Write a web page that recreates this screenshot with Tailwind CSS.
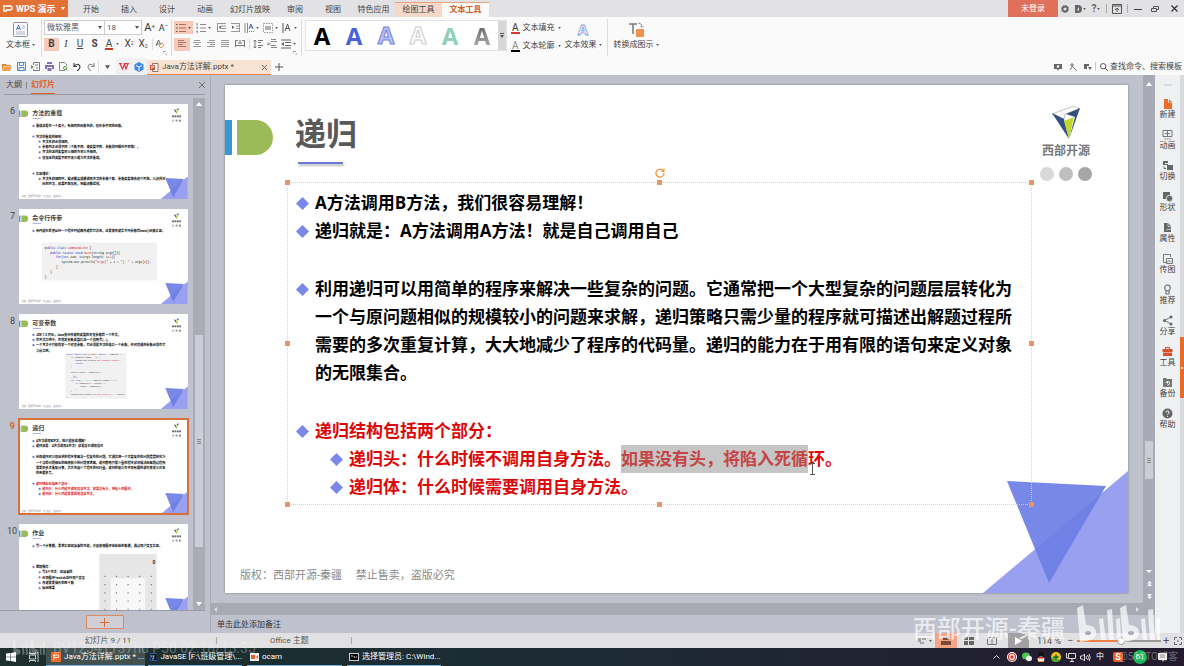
<!DOCTYPE html>
<html lang="zh-CN">
<head>
<meta charset="utf-8">
<meta name="viewport" content="width=device-width, initial-scale=1">
<title>Java方法详解.pptx - WPS 演示</title>
<script src="https://cdn.jsdelivr.net/npm/@tailwindcss/browser@4"></script>
</head>
<body class="h-screen overflow-hidden flex flex-col bg-[#bfc2cd] text-[8px] leading-[12px] text-[#444] font-['Roboto','Noto_Sans_CJK_SC',sans-serif]">

<svg class="hidden" aria-hidden="true">
  <symbol id="caret" viewBox="0 0 4 3"><path d="M0 0h4L2 3z" fill="#555"/></symbol>
  <symbol id="logo" viewBox="0 0 28 33">
    <path d="M0 8 22 0 28 3 13 8 12 13 3 9z" fill="#fff" stroke="#999" stroke-width=".6"/>
    <path d="M0 7 12 13 17 33z" fill="#34507f"/>
    <path d="M14 8 28 2 17 33 23 11z" fill="#34507f"/>
    <path d="M12 15 22 11 17 33z" fill="#bfd730"/>
  </symbol>
  <symbol id="corner" viewBox="0 0 145 122">
    <path d="M0 122 145 0V122z" fill="#99a0f0"/>
    <path d="M24 10 123 15 66 112z" fill="#6c7ee4" fill-opacity=".92"/>
  </symbol>
  <symbol id="deco" viewBox="0 0 903 508">
    <rect width="903" height="508" fill="#fff"/>
    <rect y="35" width="7" height="35" fill="#3498d6"/>
    <path d="M12 35h19a17.500 17.500 0 0 1 0 35H12z" fill="#9bbb59"/>
    <rect x="73" y="77" width="45" height="3" fill="#6b79d8"/>
    <use href="#logo" x="827" y="21" width="28" height="33"/>
    <g fill="#666"><rect x="818" y="61" width="10" height="10"/><rect x="831" y="61" width="10" height="10"/><rect x="844" y="61" width="10" height="10"/><rect x="857" y="61" width="9" height="10"/></g>
    <circle cx="823" cy="89" r="6" fill="#bbb"/><circle cx="842" cy="89" r="6" fill="#999"/><circle cx="860" cy="89" r="6" fill="#888"/>
    <use href="#corner" x="758" y="386" width="145" height="122"/>
    <text x="15" y="496" font-size="11" font-weight="400" fill="#888">版权：西部开源-秦疆　禁止售卖，盗版必究</text>
  </symbol>
  <symbol id="bili" viewBox="0 0 85 38">
    <g fill="currentColor">
      <path d="M2 3 8 0 11 20Q22 20 21 30 18 36 5 37z"/><path d="M24 14 28 13 31 35H26z"/><path d="M32 5 37 4 39 35H34z"/><path d="M41 14 45 13 46 35H42z"/>
      <path d="M45 3 51 0 54 20Q65 20 64 30 61 36 48 37z"/><path d="M66 14 70 13 72 35H68z"/><path d="M73 5 78 4 80 35H75z"/><path d="M81 14 85 13V35H82z"/>
    </g>
    <ellipse cx="13" cy="28" rx="3" ry="2" fill="#a8abb8"/><ellipse cx="56" cy="28" rx="3" ry="2" fill="#a8abb8"/>
  </symbol>
</svg>

<!-- Title bar -->
<header class="h-[17px] shrink-0 flex bg-[#e2e2e4]">
  <button class="w-[68px] h-full bg-[#e37035] text-white font-bold flex items-center pl-[3px] gap-[3px]">
    <svg class="w-[10px] h-[8px]" viewBox="0 0 10 8" fill="none" stroke="#fff" stroke-width="1.500"><path d="M0 1h7a2 2 0 0 1 0 4H3M1 1v5h3"/></svg>
    <span class="text-[9px]">WPS 演示</span>
    <svg class="w-[4px] h-[3px] ml-auto mr-[3px]" viewBox="0 0 4 3"><path d="M0 0h4L2 3z" fill="#fff"/></svg>
  </button>
  <nav class="flex ml-[4px] h-full pt-[2px]">
    <button class="w-[38px]">开始</button><button class="w-[38px]">插入</button><button class="w-[38px]">设计</button><button class="w-[38px]">动画</button>
    <button class="w-[52px]">幻灯片放映</button><button class="w-[38px]">审阅</button><button class="w-[38px]">视图</button><button class="w-[43px]">特色应用</button>
    <button class="w-[47px] bg-[#f4d9ca] border-t border-[#eda27c]">绘图工具</button>
    <button class="w-[47px] bg-[#fafafa] border-t border-[#eda27c] text-[#d2611f] font-bold">文本工具</button>
  </nav>
  <div class="ml-auto flex h-full items-center">
    <button class="w-[50px] h-full bg-[#e0705a] text-white">未登录</button>
    <button class="w-[14px] flex justify-center" aria-label="设置"><svg class="size-[8px]" viewBox="0 0 8 8"><circle cx="4" cy="4" r="2.500" fill="none" stroke="#666" stroke-width="1.800"/><circle cx="4" cy="4" r="3.500" fill="none" stroke="#666" stroke-dasharray="1.400 1.300"/></svg></button>
    <button class="w-[16px] flex justify-center items-center gap-px" aria-label="皮肤"><svg class="size-[8px]" viewBox="0 0 8 8"><path d="M1 0h3a4 4 0 0 1 0 8H1z" fill="#666"/><path d="M3 5 5 2v4z" fill="#ddd"/></svg><svg class="w-[3px] h-[2px]"><use href="#caret"/></svg></button>
    <button class="w-[16px] flex justify-center items-center gap-px text-[10px] font-bold text-[#666]" aria-label="帮助">?<svg class="w-[3px] h-[2px]"><use href="#caret"/></svg></button>
    <span class="w-px h-[9px] bg-[#aaa] ml-[2px]"></span>
    <button class="w-[20px] flex justify-center" aria-label="收起"><svg class="size-[10px]" viewBox="0 0 10 10" fill="none" stroke="#555"><path d="M.5.5h9v9h-9zM.5 2h9M5 8V4M3 6l2-2 2 2"/></svg></button>
    <span class="w-px h-[9px] bg-[#aaa] mr-[2px]"></span>
    <button class="w-[16px] flex justify-center" aria-label="最小化"><svg class="w-[8px] h-[8px]" viewBox="0 0 8 8"><path d="M0 4.500h8" stroke="#444"/></svg></button>
    <button class="w-[18px] flex justify-center" aria-label="还原"><svg class="size-[8px]" viewBox="0 0 8 8" fill="none" stroke="#555"><path d="M.5 3.500h5v3h-5zM2.500 3V1.500h5v3H6"/></svg></button>
    <button class="w-[20px] flex justify-center" aria-label="关闭"><svg class="size-[7px]" viewBox="0 0 7 7"><path d="M.5.5l6 6M6.500.5l-6 6" stroke="#333" stroke-width="1.200"/></svg></button>
  </div>
</header>

<!-- Ribbon -->
<section class="h-[41px] shrink-0 flex bg-[#fafafa]" aria-label="文本工具">
  <button class="w-[41px] flex flex-col items-center pt-[5px] gap-[2px]">
    <svg class="size-[15px]" viewBox="0 0 15 15" fill="none"><rect x=".5" y=".5" width="14" height="14" rx="1" stroke="#8a8f9a"/><path d="M3.500 8 5.500 3l2 5M4 6.500h3" stroke="#4a72c8"/><path d="M9 4h3M9 6h3M3 10h9M3 12h9" stroke="#aab4c8"/></svg>
    <span class="flex items-center gap-[2px] whitespace-nowrap">文本框<svg class="w-[3px] h-[2px]"><use href="#caret"/></svg></span>
  </button>
  <span class="w-px h-[37px] mt-[2px] bg-[#ddd]"></span>
  <div class="w-[129px] pl-[2px] pt-[3px]">
    <div class="flex h-[15px] items-center">
      <label class="relative h-full"><select aria-label="字体" class="appearance-none w-[61px] h-full border border-[#ccc] bg-white pl-[2px] text-[8px] text-[#555]"><option>微软雅黑</option></select><svg class="absolute right-[3px] top-[6px] w-[4px] h-[3px]"><use href="#caret"/></svg></label>
      <label class="relative h-full"><select aria-label="字号" class="appearance-none w-[37px] h-full border border-l-0 border-[#ccc] bg-white pl-[2px] text-[8px] text-[#555]"><option>18</option></select><svg class="absolute right-[3px] top-[6px] w-[4px] h-[3px]"><use href="#caret"/></svg></label>
      <button class="w-[15px] text-[11px] text-[#333]" aria-label="增大字号">A<sup class="text-[6px]">+</sup></button>
      <button class="w-[13px] text-[9px] text-[#333]" aria-label="减小字号">A<sup class="text-[6px]">−</sup></button>
    </div>
    <div class="flex h-[14px] mt-[2px] items-center text-[10px] text-[#444]">
      <button class="w-[15px] h-[13px] bg-[#f7c9b8] font-bold">B</button><button class="w-[14px] italic font-['Liberation_Serif',serif]">I</button><button class="w-[14px] underline">U</button><button class="w-[15px] font-bold">S</button>
      <button class="w-[20px] flex items-center justify-center gap-[3px]" aria-label="字体颜色"><span class="border-b-2 border-[#c0392b] leading-[9px] px-px">A</span><svg class="w-[3px] h-[2px]"><use href="#caret"/></svg></button>
      <button class="w-[14px]">X<sup class="text-[5px]">2</sup></button><button class="w-[14px]">X<sub class="text-[5px]">2</sub></button>
      <span class="w-px h-[11px] bg-[#ddd] mx-[2px]"></span>
      <button class="w-[11px] flex items-center" aria-label="清除格式"><svg class="size-[10px]" viewBox="0 0 10 10" fill="none"><path d="M1 7 3.500 1 6 6M2 5h3" stroke="#666"/><path d="m4 7 3-3 2 2-3 3z" fill="#fff" stroke="#e39a4a"/></svg></button>
    </div>
    <div class="flex justify-end pr-[4px]"><svg class="size-[4px]" viewBox="0 0 4 4"><path d="M0 3V.5h3M4 2v2H2" fill="none" stroke="#999" stroke-width=".8"/></svg></div>
  </div>
  <span class="w-px h-[37px] mt-[2px] bg-[#ddd]"></span>
  <div class="w-[129px] pl-[2px] pt-[3px] text-[#777]">
    <div class="flex h-[15px] items-center">
      <button class="w-[19px] h-[13px] bg-[#f7c9b8] flex items-center justify-center gap-[2px]" aria-label="项目符号"><svg class="size-[10px]" viewBox="0 0 10 10" stroke="#b86a5a"><path d="M3 1.500h7M3 5h7M3 8.500h7"/><path d="M0 1.500h1.500M0 5h1.500M0 8.500h1.500" stroke="#555"/></svg><svg class="w-[3px] h-[2px]"><use href="#caret"/></svg></button>
      <button class="w-[21px] flex items-center justify-center gap-[2px]" aria-label="编号"><svg class="size-[10px]" viewBox="0 0 10 10" stroke="#888"><path d="M4 1.500h6M4 5h6M4 8.500h6M1 0v3M.5 4.500h1v1.500M.5 8h1v2"/></svg><svg class="w-[3px] h-[2px]"><use href="#caret"/></svg></button>
      <button class="w-[14px] flex justify-center" aria-label="减少缩进"><svg class="size-[9px]" viewBox="0 0 9 9" stroke="#999"><path d="M0 .5h9M4 3h5M4 5.500h5M0 8.500h9M.5 0v9"/><path d="M4 2.500v3.500L1.500 4.200z" fill="#666" stroke="none"/></svg></button>
      <button class="w-[14px] flex justify-center" aria-label="增加缩进"><svg class="size-[9px]" viewBox="0 0 9 9" stroke="#999"><path d="M0 .5h9M5 3h4M5 5.500h4M0 8.500h9M8.500 0v9"/><path d="M1 2.500v3.500l2.500-1.800z" fill="#666" stroke="none"/></svg></button>
      <button class="w-[19px] flex items-center justify-center gap-[2px]" aria-label="文字方向"><svg class="size-[10px]" viewBox="0 0 10 10" fill="none"><path d="M1 0v10M3.500 0v10" stroke="#888"/><path d="m5 6 2-5 2 5M5.500 4h3" stroke="#56b"/><path d="M5 8.500h5" stroke="#888" stroke-dasharray="1"/></svg><svg class="w-[3px] h-[2px]"><use href="#caret"/></svg></button>
      <button class="w-[19px] flex items-center justify-center gap-[2px]" aria-label="对齐文本"><svg class="size-[10px]" viewBox="0 0 10 10" fill="none" stroke="#999"><path d="M.5.5h9v9h-9z" stroke-dasharray="1.500 1"/><path d="M2 4h6M2 6h6" stroke="#666"/></svg><svg class="w-[3px] h-[2px]"><use href="#caret"/></svg></button>
      <button class="w-[19px] flex items-center justify-center gap-[2px]" aria-label="字符间距"><svg class="size-[10px]" viewBox="0 0 10 10" fill="none" stroke="#555"><path d="M1 0v10M3 8l2.500-7L8 8M4 5.500h3"/></svg><svg class="w-[3px] h-[2px]"><use href="#caret"/></svg></button>
    </div>
    <div class="flex h-[14px] mt-[2px] items-center">
      <button class="w-[16px] h-[13px] bg-[#f7c9b8] flex items-center justify-center" aria-label="左对齐"><svg class="size-[8px]" viewBox="0 0 8 8" stroke="#b07568"><path d="M0 .5h6M0 2.500h8M0 4.500h5M0 6.500h8"/></svg></button>
      <button class="w-[14px] flex justify-center" aria-label="居中"><svg class="size-[8px]" viewBox="0 0 8 8" stroke="#999"><path d="M1 .5h6M0 2.500h8M2 4.500h4M0 6.500h8"/></svg></button>
      <button class="w-[14px] flex justify-center" aria-label="右对齐"><svg class="size-[8px]" viewBox="0 0 8 8" stroke="#999"><path d="M2 .5h6M0 2.500h8M3 4.500h5M0 6.500h8"/></svg></button>
      <button class="w-[14px] flex justify-center" aria-label="两端对齐"><svg class="size-[8px]" viewBox="0 0 8 8" stroke="#999"><path d="M0 .5h8M0 2.500h8M0 4.500h8M0 6.500h8"/></svg></button>
      <button class="w-[16px] flex justify-center" aria-label="分散对齐"><svg class="w-[10px] h-[8px]" viewBox="0 0 10 8" fill="none" stroke="#777"><path d="M.5 7V.5h2.500M9.500 7V.5H7M.5 5.500h9M3 3h4M5 0v3"/></svg></button>
      <span class="w-px h-[11px] bg-[#ddd] mx-px"></span>
      <button class="w-[14px] flex justify-center" aria-label="行距"><svg class="size-[10px]" viewBox="0 0 10 10" stroke="#777"><path d="M5 1.500h5M5 3.500h3M5 6.500h5M5 8.500h3M2 1v8M.5 2.500 2 1l1.500 1.500M.5 7.500 2 9l1.500-1.500" fill="none"/></svg></button>
      <button class="w-[14px] flex justify-center" aria-label="段间距"><svg class="size-[10px]" viewBox="0 0 10 10" stroke="#888"><path d="M4 .5h5M4 2.500h6M4 6.500h5M4 8.500h6M0 5h4M2 3.500 .5 5 2 6.500" fill="none"/></svg></button>
      <button class="w-[19px] flex items-center justify-center gap-[2px]" aria-label="制表位"><svg class="size-[10px]" viewBox="0 0 10 10" stroke="#666"><path d="M0 1h10M4 3.500h6M4 6.500h6M0 9h10"/><path d="M0 5 3 3v4z" fill="#666" stroke="none"/></svg><svg class="w-[3px] h-[2px]"><use href="#caret"/></svg></button>
    </div>
    <div class="flex justify-end pr-[4px]"><svg class="size-[4px]" viewBox="0 0 4 4"><path d="M0 3V.5h3M4 2v2H2" fill="none" stroke="#999" stroke-width=".8"/></svg></div>
  </div>
  <span class="w-px h-[37px] mt-[2px] bg-[#ddd]"></span>
  <div class="flex ml-[3px] mt-[3px] h-[31px] bg-white border border-[#e2e2e2] text-[24px] leading-[29px] font-bold font-['Open_Sans',sans-serif]">
    <button class="w-[32px] text-black">A</button>
    <button class="w-[32px] text-[#4a62d8]">A</button>
    <button class="w-[32px] flex items-center justify-center" aria-label="A 双线"><svg class="w-[24px] h-[29px] overflow-visible" viewBox="0 0 24 29"><text x="12" y="23" text-anchor="middle" font-size="24" font-weight="700" fill="#b9c2f4" stroke="#6f7fe0">A</text></svg></button>
    <button class="w-[32px] flex items-center justify-center" aria-label="A 空心"><svg class="w-[24px] h-[29px] overflow-visible" viewBox="0 0 24 29"><text x="12" y="23" text-anchor="middle" font-size="24" font-weight="700" fill="#fff" stroke="#ccc">A</text></svg></button>
    <button class="w-[32px] text-[#8fcfbc]">A</button>
    <button class="w-[32px] text-transparent bg-clip-text bg-linear-to-b from-[#555] to-[#bbb]">A</button>
    <button class="w-[8px] h-full bg-[#d8d8da] flex flex-col items-center justify-center gap-px" aria-label="更多样式"><span class="w-[4px] h-px bg-[#555]"></span><svg class="w-[4px] h-[3px]"><use href="#caret"/></svg></button>
  </div>
  <div class="ml-[4px] pt-[4px] flex flex-col gap-[4px]">
    <button class="flex items-center gap-[3px] whitespace-nowrap h-[14px]"><span class="text-[10px] leading-[9px] text-[#333] border-b-2 border-[#d23a2e] px-px">A</span>文本填充<svg class="w-[3px] h-[2px]"><use href="#caret"/></svg></button>
    <button class="flex items-center gap-[3px] whitespace-nowrap h-[14px]"><span class="text-[10px] leading-[9px] text-[#888] border-b-2 border-black px-px">A</span>文本轮廓<svg class="w-[3px] h-[2px]"><use href="#caret"/></svg></button>
  </div>
  <button class="ml-[4px] flex flex-col items-center pt-[4px] gap-[2px] whitespace-nowrap">
    <svg class="w-[16px] h-[16px] overflow-visible font-['Open_Sans',sans-serif]" viewBox="0 0 16 16"><text x="8" y="14" text-anchor="middle" font-size="15" font-weight="700" fill="#fff" stroke="#7c9be0" stroke-width=".8">A</text></svg>
    <span class="flex items-center gap-[2px]">文本效果<svg class="w-[3px] h-[2px]"><use href="#caret"/></svg></span>
  </button>
  <span class="w-px h-[37px] mt-[2px] ml-[5px] bg-[#ddd]"></span>
  <button class="ml-[6px] flex flex-col items-center pt-[5px] gap-px whitespace-nowrap">
    <svg class="size-[16px]" viewBox="0 0 16 16" fill="none"><path d="M1 2h8M5 2v10" stroke="#777" stroke-width="1.500"/><rect x="8" y="7" width="8" height="8" rx="1" fill="#f0914f"/><path d="M10 1q4 0 4 4M12.500 4 14 5.500 15.500 4" stroke="#999"/></svg>
    <span class="flex items-center gap-[2px]">转换成图示<svg class="w-[3px] h-[2px]"><use href="#caret"/></svg></span>
  </button>
</section>

<!-- Quick access and document tabs -->
<section class="h-[17px] shrink-0 flex items-center bg-[#fafafa]">
  <button class="w-[14px] flex justify-center" aria-label="打开"><svg class="size-[10px]" viewBox="0 0 10 10"><path d="M0 2h4l1 1h4v1H2L0 9z" fill="#e0862f"/><path d="M2.500 4.500H10L8 9H.500z" fill="#f0a04b"/></svg></button>
  <button class="w-[14px] flex justify-center" aria-label="保存"><svg class="size-[9px]" viewBox="0 0 9 9" fill="none" stroke="#4f8fd8"><path d="M.5.5h8v8h-8zM2.500.5v3h4v-3M2 8.500V5.500h5v3"/></svg></button>
  <button class="w-[14px] flex justify-center" aria-label="输出"><svg class="size-[9px]" viewBox="0 0 9 9" fill="none" stroke="#777"><path d="M2.500 3V.5h6v8h-6V7M4 3h3M5 6h2"/><path d="M0 3l3 2-3 2z" fill="#5a9a4a" stroke="none"/></svg></button>
  <button class="w-[14px] flex justify-center" aria-label="打印"><svg class="size-[9px]" viewBox="0 0 9 9"><path d="M2 0h5v2H2zM0 3h9v4H7V5H2v2H0zM2.500 6h4v3h-4z" fill="#7d71b8"/></svg></button>
  <button class="w-[14px] flex justify-center" aria-label="打印预览"><svg class="size-[9px]" viewBox="0 0 9 9" fill="none" stroke="#888"><path d="M6 8.500H.5v-8h5l2 2V4"/><circle cx="6" cy="6" r="1.500" stroke="#5a9a4a"/><path d="m7 7 1.500 1.500" stroke="#5a9a4a"/></svg></button>
  <button class="w-[14px] flex justify-center" aria-label="撤消"><svg class="size-[8px]" viewBox="0 0 8 8" fill="none" stroke="#444" stroke-width="1.200"><path d="M1 0v3.500h3M1 3.500Q4 0 6.500 2.500 8 5 4 8"/></svg></button>
  <button class="w-[14px] flex justify-center" aria-label="恢复"><svg class="size-[8px]" viewBox="0 0 8 8" fill="none" stroke="#999" stroke-width="1.200"><path d="M7 0v3.500H4M7 3.500Q4 0 1.500 2.500 0 5 4 8"/></svg></button>
  <span class="w-px h-[12px] bg-[#ddd]"></span>
  <button class="w-[17px] flex justify-center" aria-label="自定义"><svg class="w-[5px] h-[4px]"><use href="#caret"/></svg></button>
  <button class="w-[15px] h-full bg-[#f1f1f3] flex justify-center items-center" aria-label="WPS"><svg class="w-[10px] h-[7px]" viewBox="0 0 10 7" fill="none" stroke="#dc3b45" stroke-width="1.200"><path d="M0 .6h3M1 .6 3.500 6 5.500 1 7 6 9 .6H4.500M8 .6h2"/></svg></button>
  <button class="w-[16px] h-full bg-[#f1f1f3] flex justify-center items-center" aria-label="云文档"><svg class="size-[10px]" viewBox="0 0 10 10"><path d="M5 0 9.500 2.500v5L5 10 .5 7.500v-5z" fill="#3d86e6"/><path d="M2 3.500 5 5l3-1.500M5 5v4" stroke="#fff" fill="none"/></svg></button>
  <div class="w-[124px] h-[15px] self-end bg-[#f8e2d1] border-b border-[#e8834d] flex items-center pl-[3px]">
    <svg class="size-[9px]" viewBox="0 0 9 9"><path d="M2.500.5h5.500v8h-5.500z" fill="#fff" stroke="#9a7060"/><rect y="2" width="5" height="5" fill="#c8543a"/><path d="M1.500 6V3h2v1.500h-2" stroke="#fff" stroke-width=".7" fill="none"/></svg>
    <span class="ml-[3px] whitespace-nowrap text-[8px]">Java方法详解.pptx *</span>
    <button class="ml-auto mr-[4px]" aria-label="关闭标签"><svg class="size-[5px]" viewBox="0 0 5 5"><path d="M0 0l5 5M5 0 0 5" stroke="#666"/></svg></button>
  </div>
  <button class="w-[16px] flex justify-center" aria-label="新建标签"><svg class="size-[8px]" viewBox="0 0 8 8"><path d="M4 0v8M0 4h8" stroke="#555"/></svg></button>
  <div class="ml-auto flex items-center pr-px">
    <button class="w-[15px] flex justify-center" aria-label="同步"><svg class="size-[8px]" viewBox="0 0 8 8"><path d="M0 1h8v5H5L4 8 3 6H0z" fill="#666"/><circle cx="4" cy="3.500" r="1.300" fill="#fafafa"/></svg></button>
    <button class="w-[15px] flex justify-center" aria-label="工具"><svg class="size-[8px]" viewBox="0 0 8 8" fill="none" stroke="#777"><path d="M1 2h4M3 0v4L1 7M3 3l4.500 4.500"/></svg></button>
    <button class="w-[15px] flex justify-center" aria-label="视图选项"><svg class="size-[8px]" viewBox="0 0 8 8"><path d="M0 1h5v2H3v3H0zM4 4h4L6 7z" fill="#666"/></svg></button>
    <span class="w-px h-[9px] bg-[#ccc] mr-[4px]"></span>
    <label class="flex items-center gap-[2px]"><svg class="size-[8px]" viewBox="0 0 8 8" fill="none" stroke="#555"><circle cx="3.200" cy="3.200" r="2.700"/><path d="m5 5 3 3"/></svg><input class="w-[73px] bg-transparent text-[8px] leading-[12px] placeholder:text-[#444]" placeholder="查找命令、搜索模板" aria-label="查找命令、搜索模板"></label>
  </div>
</section>

<!-- Workspace -->
<main class="flex-1 min-h-0 flex">
  <div class="flex-1 min-w-0 flex">
    <!-- Slide navigator -->
    <aside class="w-[211px] shrink-0 flex flex-col border-r border-[#a9acb6] pt-px">
      <div class="h-[19px] mx-[4px] mr-[5px] border-b border-[#9a9ca6] flex items-center pl-[2px]">
        <button>大纲</button><span class="w-px h-[7px] bg-[#888] mx-[4px]"></span><button class="text-[#e0602a] font-bold border-b border-[#e0602a] h-full">幻灯片</button>
        <button class="ml-auto" aria-label="关闭窗格"><svg class="size-[6px]" viewBox="0 0 6 6"><path d="M0 0l6 6M6 0 0 6" stroke="#555" stroke-width=".8"/></svg></button>
      </div>
      <div class="flex-1 min-h-0 flex mr-[5px] mt-[3px] border-b border-[#9a9ca6]">
        <ol class="w-[193px] overflow-hidden flex flex-col gap-[10px] pt-[6px]">
          <li class="flex shrink-0"><span class="w-[19px] pr-[4px] pt-px text-right text-[9px]">6</span>
            <svg class="w-[169px] h-[95px]" viewBox="0 0 903 508" font-size="17" font-weight="700"><use href="#deco"/>
              <text x="71" y="61" font-size="32" fill="#444">方法的重载</text>
              <g fill="#6b79d8"><circle cx="77" cy="117" r="6"/><circle cx="77" cy="174" r="6"/><circle cx="77" cy="372" r="6"/><circle cx="110" cy="201" r="6"/><circle cx="110" cy="230" r="6"/><circle cx="110" cy="258" r="6"/><circle cx="110" cy="288" r="6"/><circle cx="110" cy="401" r="6"/></g>
              <text x="90" y="123">重载就是在一个类中，有相同的函数名称，但形参不同的函数。</text>
              <text x="90" y="180">方法的重载的规则：</text>
              <text x="124" y="207">方法名称必须相同。</text>
              <text x="124" y="236">参数列表必须不同（个数不同、或类型不同、参数排列顺序不同等）。</text>
              <text x="124" y="264">方法的返回类型可以相同也可以不相同。</text>
              <text x="124" y="294">仅仅返回类型不同不足以成为方法的重载。</text>
              <text x="90" y="378">实现理论：</text>
              <text x="124" y="407">方法名称相同时，编译器会根据调用方法的参数个数、参数类型等去逐个匹配，以选择对</text>
              <text x="124" y="435">应的方法，如果匹配失败，则编译器报错。</text>
            </svg></li>
          <li class="flex shrink-0"><span class="w-[19px] pr-[4px] pt-px text-right text-[9px]">7</span>
            <svg class="w-[169px] h-[95px]" viewBox="0 0 903 508" font-size="17" font-weight="700"><use href="#deco"/>
              <text x="71" y="61" font-size="32" fill="#444">命令行传参</text>
              <circle cx="77" cy="117" r="6" fill="#6b79d8"/>
              <text x="90" y="123">有时候你希望运行一个程序时候再传递给它消息。这要靠传递命令行参数给main()函数实现。</text>
              <rect x="123" y="179" width="614" height="203" fill="#f1f1f1"/>
              <g font-family="Liberation Mono" font-size="16" font-weight="400" fill="#222">
                <text x="137" y="212"><tspan fill="#22c">public class</tspan> <tspan fill="#c22">CommandLine</tspan> {</text>
                <text x="167" y="238"><tspan fill="#22c">public static void</tspan> <tspan fill="#c22">main</tspan>(String args[]){</text>
                <text x="197" y="264"><tspan fill="#22c">for</tspan>(<tspan fill="#22c">int</tspan> i=0; i&lt;args.length; i++){</text>
                <text x="227" y="290">System.out.println(<tspan fill="#c22">"args["</tspan> + i + <tspan fill="#c22">"]: "</tspan> + args[i]);</text>
                <text x="197" y="316">}</text><text x="167" y="342">}</text><text x="137" y="368">}</text>
              </g>
            </svg></li>
          <li class="flex shrink-0"><span class="w-[19px] pr-[4px] pt-px text-right text-[9px]">8</span>
            <svg class="w-[169px] h-[95px]" viewBox="0 0 903 508" font-size="17" font-weight="700"><use href="#deco"/>
              <text x="71" y="61" font-size="32" fill="#444">可变参数</text>
              <g fill="#6b79d8"><circle cx="77" cy="112" r="6"/><circle cx="77" cy="139" r="6"/><circle cx="77" cy="167" r="6"/></g>
              <text x="90" y="118">JDK 1.5 开始，Java支持传递同类型的可变参数给一个方法。</text>
              <text x="90" y="145">在方法声明中，在指定参数类型后加一个省略号(...)。</text>
              <text x="90" y="173">一个方法中只能指定一个可变参数，它必须是方法的最后一个参数。任何普通的参数必须在它</text>
              <text x="90" y="202">之前声明。</text>
              <rect x="247" y="207" width="328" height="246" fill="#f1f1f1"/>
              <g font-family="Liberation Mono" font-size="10" font-weight="400" fill="#222">
                <text x="254" y="221"><tspan fill="#22c">public static void</tspan> <tspan fill="#c22">printMax</tspan>( <tspan fill="#22c">double</tspan>... numbers) {</text>
                <text x="278" y="236"><tspan fill="#22c">if</tspan> (numbers.length == 0) {</text>
                <text x="302" y="252">System.out.println(<tspan fill="#c22">"No argument passed"</tspan>);</text>
                <text x="302" y="267" fill="#22c">return;</text><text x="278" y="282">}</text>
                <text x="278" y="313"><tspan fill="#22c">double</tspan> result = numbers[0];</text>
                <text x="278" y="343" fill="#888">//排序!</text>
                <text x="278" y="358"><tspan fill="#22c">for</tspan> (<tspan fill="#22c">int</tspan> i = 1; i &lt; numbers.length; i++){</text>
                <text x="302" y="374"><tspan fill="#22c">if</tspan> (numbers[i] &gt; result) {</text>
                <text x="326" y="389">result = numbers[i];</text><text x="302" y="404">}</text><text x="278" y="419">}</text>
                <text x="278" y="434">System.out.println(<tspan fill="#c22">"The max value is "</tspan> + result);</text><text x="254" y="449">}</text>
              </g>
            </svg></li>
          <li class="flex shrink-0" aria-current="true"><span class="w-[19px] pr-[4px] pt-px text-right text-[9px] font-bold text-[#d8622c]">9</span>
            <svg class="w-[169px] h-[95px] outline-2 -outline-offset-1 outline-[#d8703a]" viewBox="0 0 903 508" font-size="17" font-weight="700"><use href="#deco"/>
              <text x="71" y="61" font-size="32" fill="#444">递归</text>
              <g fill="#6b79d8"><circle cx="77" cy="118" r="6"/><circle cx="77" cy="146" r="6"/><circle cx="77" cy="203" r="6"/><circle cx="77" cy="345" r="6"/><circle cx="110" cy="374" r="6"/><circle cx="110" cy="402" r="6"/></g>
              <text x="90" y="124">A方法调用B方法，我们很容易理解！</text>
              <text x="90" y="152">递归就是：A方法调用A方法！就是自己调用自己</text>
              <text x="90" y="209">利用递归可以用简单的程序来解决一些复杂的问题。它通常把一个大型复杂的问题层层转化为</text>
              <text x="90" y="238">一个与原问题相似的规模较小的问题来求解，递归策略只需少量的程序就可描述出解题过程所</text>
              <text x="90" y="266">需要的多次重复计算，大大地减少了程序的代码量。递归的能力在于用有限的语句来定义对象</text>
              <text x="90" y="294">的无限集合。</text>
              <g fill="#e01010"><text x="90" y="351">递归结构包括两个部分：</text>
              <text x="124" y="380">递归头：什么时候不调用自身方法。如果没有头，将陷入死循环。</text>
              <text x="124" y="408">递归体：什么时候需要调用自身方法。</text></g>
            </svg></li>
          <li class="flex shrink-0"><span class="w-[19px] pr-[2px] pt-px text-right text-[9px]">10</span>
            <svg class="w-[169px] h-[95px]" viewBox="0 0 903 508" font-size="17" font-weight="700"><use href="#deco"/>
              <text x="71" y="61" font-size="32" fill="#444">作业</text>
              <g fill="#6b79d8"><circle cx="77" cy="119" r="6"/><circle cx="77" cy="230" r="6"/><circle cx="110" cy="258" r="6"/><circle cx="110" cy="286" r="6"/><circle cx="110" cy="315" r="6"/><circle cx="110" cy="343" r="6"/></g>
              <text x="90" y="125">写一个计算器，要求实现加减乘除功能，并且能够循环接收新的数据，通过用户交互实现。</text>
              <text x="90" y="236">思路推荐：</text><text x="124" y="264">写4个方法：加减乘除</text><text x="124" y="292">利用循环+switch进行用户交互</text><text x="124" y="321">传递需要操作的两个数</text><text x="124" y="349">输出结果</text>
              <rect x="429" y="160" width="306" height="348" fill="#e6e6e6"/><rect x="490" y="290" width="184" height="170" fill="#f8f8f8"/>
              <text x="714" y="214" font-size="26" fill="#333">0</text>
              <g stroke="#777" stroke-width="6" stroke-dasharray="6 56" fill="none"><path d="M456 280h280M456 324h280M456 368h280M456 412h280M456 456h280"/></g>
            </svg></li>
        </ol>
        <div class="w-[12px] bg-[#a9abb5] flex flex-col items-center py-[4px] shrink-0">
          <svg class="w-[6px] h-[4px]" viewBox="0 0 6 4"><path d="M0 4h6L3 0z" fill="#fff"/></svg>
          <div class="mt-[229px] w-[8px] h-[212px] bg-[#cbced8] flex flex-col items-center justify-center gap-px"><span class="w-[4px] h-px bg-[#888]"></span><span class="w-[4px] h-px bg-[#888]"></span><span class="w-[4px] h-px bg-[#888]"></span></div>
          <svg class="w-[6px] h-[4px] mt-auto" viewBox="0 0 6 4"><path d="M0 0h6L3 4z" fill="#fff"/></svg>
        </div>
      </div>
      <div class="h-[22px] flex items-center justify-center pr-px">
        <button class="w-[38px] h-[14px] border border-[#dd8a62] rounded-[1px] flex items-center justify-center bg-[#d0cfd5]" aria-label="新建幻灯片"><svg class="size-[9px]" viewBox="0 0 9 9"><path d="M4.500 0v9M0 4.500h9" stroke="#dc6a30"/></svg></button>
      </div>
    </aside>

    <!-- Editor -->
    <section class="flex-1 min-w-0 flex flex-col">
      <div class="flex-1 min-h-0 flex">
        <div class="flex-1 min-w-0 pt-[10px] pb-[10px] pl-[14px] pr-[15px]">
          <article class="relative h-full bg-white shadow-[0_0_2px_#777] flex flex-col overflow-hidden">
            <svg class="absolute right-0 bottom-0 w-[145px] h-[122px]"><use href="#corner"/></svg>
            <div class="flex items-start">
              <div class="flex gap-[5px] mt-[35px]"><span class="w-[7px] h-[35px] bg-[#3498d6]"></span><span class="w-[36px] h-[35px] rounded-r-full bg-[#9bbb59]"></span></div>
              <div class="ml-[22px] mt-[29px]">
                <h1 class="text-[31px] leading-[42px] font-bold text-[#595959]">递归</h1>
                <div class="w-[45px] h-[2px] mt-[6px] ml-[3px] bg-[#6b79d8] shadow-[1px_2px_2px_#bbb]"></div>
              </div>
              <div class="ml-auto mr-[36px] mt-[21px] flex flex-col items-center">
                <svg class="w-[28px] h-[33px]"><use href="#logo"/></svg>
                <div class="text-[12px] leading-[16px] font-bold text-[#777] mt-[4px]">西部开源</div>
                <div class="flex gap-[5px] mt-[8px]"><span class="size-[14px] rounded-full bg-[#d9d9d9]"></span><span class="size-[14px] rounded-full bg-[#bfbfbf]"></span><span class="size-[14px] rounded-full bg-[#a6a6a6]"></span></div>
              </div>
            </div>
            <div class="relative mt-px ml-[62px] mr-[96px] h-[323px] border border-dotted border-[#dcd0c4] pt-[6px] pl-[8px] text-[17px] leading-[28px] font-bold text-black whitespace-nowrap font-['Open_Sans','Noto_Sans_CJK_SC',sans-serif]">
              <span class="absolute -left-[3px] -top-[3px] size-[5px] bg-[#e8946a]"></span><span class="absolute left-1/2 -top-[3px] size-[5px] -ml-[3px] bg-[#e8946a]"></span><span class="absolute -right-[3px] -top-[3px] size-[5px] bg-[#e8946a]"></span>
              <span class="absolute -left-[3px] top-1/2 size-[5px] -mt-[3px] bg-[#e8946a]"></span><span class="absolute -right-[3px] top-1/2 size-[5px] -mt-[3px] bg-[#e8946a]"></span>
              <span class="absolute -left-[3px] -bottom-[3px] size-[5px] bg-[#e8946a]"></span><span class="absolute left-1/2 -bottom-[3px] size-[5px] -ml-[3px] bg-[#e8946a]"></span><span class="absolute -right-[3px] -bottom-[3px] size-[5px] bg-[#e8946a]"></span>
              <svg class="absolute left-1/2 -ml-[5px] -top-[15px] size-[10px]" viewBox="0 0 10 10" fill="none" stroke="#eda04f" stroke-width="1.500"><path d="M8 2.500A4 4 0 1 0 9 5"/><path d="M9.500 0v4h-4z" fill="#eda04f" stroke="none"/></svg>
              <ul class="flex flex-col gap-[30px]">
                <li>
                  <div class="flex items-center"><svg class="size-[13px] mr-[6px]" viewBox="0 0 13 13"><path d="M6.500 0 13 6.500 6.500 13 0 6.500z" fill="#7b88e8"/></svg>A方法调用B方法，我们很容易理解！</div>
                  <div class="flex items-center"><svg class="size-[13px] mr-[6px]" viewBox="0 0 13 13"><path d="M6.500 0 13 6.500 6.500 13 0 6.500z" fill="#7b88e8"/></svg>递归就是：A方法调用A方法！就是自己调用自己</div>
                </li>
                <li class="flex"><svg class="size-[13px] mr-[6px] mt-[8px]" viewBox="0 0 13 13"><path d="M6.500 0 13 6.500 6.500 13 0 6.500z" fill="#7b88e8"/></svg>
                  <p>利用递归可以用简单的程序来解决一些复杂的问题。它通常把一个大型复杂的问题层层转化为<br>一个与原问题相似的规模较小的问题来求解，递归策略只需少量的程序就可描述出解题过程所<br>需要的多次重复计算，大大地减少了程序的代码量。递归的能力在于用有限的语句来定义对象<br>的无限集合。</p></li>
                <li class="text-[#dc0808]">
                  <div class="flex items-center"><svg class="size-[13px] mr-[6px]" viewBox="0 0 13 13"><path d="M6.500 0 13 6.500 6.500 13 0 6.500z" fill="#7b88e8"/></svg>递归结构包括两个部分：</div>
                  <div class="flex items-center pl-[34px]"><svg class="size-[13px] mr-[6px]" viewBox="0 0 13 13"><path d="M6.500 0 13 6.500 6.500 13 0 6.500z" fill="#7b88e8"/></svg>递归头：什么时候不调用自身方法。<span class="bg-[#c6c6c6] text-[#c44545]">如果没有头，将陷入死循</span><span class="relative">环。<svg class="absolute left-[2px] top-[18px] w-[5px] h-[12px]" viewBox="0 0 5 12" fill="none" stroke="#555"><path d="M0 .5h5M2.500 0v12M0 11.500h5"/></svg></span></div>
                  <div class="flex items-center pl-[34px]"><svg class="size-[13px] mr-[6px]" viewBox="0 0 13 13"><path d="M6.500 0 13 6.500 6.500 13 0 6.500z" fill="#7b88e8"/></svg>递归体：什么时候需要调用自身方法。</div>
                </li>
              </ul>
            </div>
            <footer class="mt-auto mb-[9px] ml-[15px] text-[11px] leading-[16px] text-[#8a8a8a]">版权：西部开源-秦疆 　禁止售卖，盗版必究</footer>
          </article>
        </div>
        <div class="w-[12px] shrink-0 bg-[#a7a9b4] flex flex-col items-center pt-[7px] pb-[4px] gap-[8px]">
          <svg class="w-[6px] h-[4px]" viewBox="0 0 6 4"><path d="M0 4h6L3 0z" fill="#fff"/></svg>
          <div class="mt-[347px] w-[8px] h-[38px] bg-[#cbccd4] flex flex-col items-center justify-center gap-px"><span class="w-[4px] h-px bg-[#888]"></span><span class="w-[4px] h-px bg-[#888]"></span><span class="w-[4px] h-px bg-[#888]"></span></div>
          <svg class="w-[6px] h-[3px] mt-auto" viewBox="0 0 6 3"><path d="M0 0h6L3 3z" fill="#fff"/></svg>
          <svg class="w-[5px] h-[5px]" viewBox="0 0 5 5"><path d="M0 2.500h5L2.500 0zM0 5h5L2.500 2.500z" fill="#fff"/></svg>
          <svg class="w-[5px] h-[5px]" viewBox="0 0 5 5"><path d="M0 0h5L2.500 2.500zM0 2.500h5L2.500 5z" fill="#fff"/></svg>
        </div>
      </div>
      <div class="h-[12px] shrink-0 bg-[#a7a9b3] flex items-center justify-between pl-[3px] pr-[16px]"><svg class="w-[3px] h-[5px]" viewBox="0 0 3 5"><path d="M3 0v5L0 2.500z" fill="#dfe0e6"/></svg><svg class="w-[3px] h-[5px]" viewBox="0 0 3 5"><path d="M0 0v5l3-2.500z" fill="#dfe0e6"/></svg></div>
      <input class="h-[18px] shrink-0 pl-[6px] text-[8px] bg-transparent placeholder:text-[#333]" placeholder="单击此处添加备注" aria-label="备注">
    </section>
  </div>

  <!-- Side tools -->
  <nav class="w-[25px] shrink-0 bg-[#eff0f2] flex flex-col items-center pt-[9px]">
    <span class="w-[8px] h-[2px] bg-[#dcdcde] mb-[12px]"></span>
    <button class="h-[31px] flex flex-col items-center"><svg class="size-[11px]" viewBox="0 0 11 11"><path d="M2 1h4v3.500h4V11H2z" fill="#ee6c2a"/><path d="M7 1v3h3z" fill="#ee6c2a"/></svg>新建</button>
    <button class="h-[31px] flex flex-col items-center"><svg class="size-[11px]" viewBox="0 0 11 11" fill="none" stroke="#777"><path d="M1 1.500h9v6H1zM2.500 10h1.500M5 10h1.500M7.500 10h1.500M5.500 2v5M3 4.500h5"/></svg>动画</button>
    <button class="h-[31px] flex flex-col items-center"><svg class="size-[11px]" viewBox="0 0 11 11"><path d="M1 1h5v2H3v1h3v1H1z" fill="#666"/><rect x="5" y="5" width="6" height="5" fill="#666"/><path d="M2 6.500v2h2" stroke="#666" fill="none"/></svg>切换</button>
    <button class="h-[31px] flex flex-col items-center"><svg class="size-[11px]" viewBox="0 0 11 11"><path d="M1 1h7v3L4 8H1z" fill="#666"/><circle cx="7.500" cy="7.500" r="3.200" fill="#666" stroke="#eff0f2" stroke-width=".8"/></svg>形状</button>
    <button class="h-[31px] flex flex-col items-center"><svg class="size-[11px]" viewBox="0 0 11 11"><path d="M2 1h4l3 3v6H2z" fill="#666"/><path d="M6 1v3.500h3M4 8l4-1 3 3" stroke="#eff0f2" fill="none" stroke-width=".7"/></svg>属性</button>
    <button class="h-[31px] flex flex-col items-center"><svg class="size-[11px]" viewBox="0 0 11 11" fill="none" stroke="#777"><path d="M4 9.500H1.500v-8h7V4"/><path d="M4.500 5.500h6v5h-6zM5 9.500l2-2 1.500 1.500 1-1"/></svg>传图</button>
    <button class="h-[31px] flex flex-col items-center"><svg class="size-[11px]" viewBox="0 0 11 11" fill="none" stroke="#777" stroke-width="1.200"><circle cx="5.500" cy="4" r="2.800"/><path d="M4 6.500V10h3V6.500"/></svg>推荐</button>
    <button class="h-[31px] flex flex-col items-center"><svg class="size-[11px]" viewBox="0 0 11 11"><path d="M9 2 2.500 5.500 9 9" stroke="#777" fill="none"/><circle cx="9" cy="2" r="1.500" fill="#666"/><circle cx="2.500" cy="5.500" r="1.500" fill="#666"/><circle cx="9" cy="9" r="1.500" fill="#666"/></svg>分享</button>
    <button class="h-[31px] flex flex-col items-center"><svg class="size-[11px]" viewBox="0 0 11 11"><path d="M3.500 3V1.500h4V3" stroke="#d8502c" fill="none"/><path d="M.5 3h10v3h-10zM1 6.500h9V10H1z" fill="#d8502c"/></svg>工具</button>
    <button class="h-[31px] flex flex-col items-center"><svg class="size-[11px]" viewBox="0 0 11 11"><path d="M1 1h3l1 1h5v8H1z" fill="#777"/><path d="M4 6a1.800 1.800 0 1 1 1.500 2M5.500 5v1.500" stroke="#eff0f2" fill="none"/></svg>备份</button>
    <button class="h-[31px] flex flex-col items-center"><svg class="size-[11px]" viewBox="0 0 11 11"><circle cx="5.500" cy="5.500" r="5" fill="#666"/><path d="M4 4.500a1.500 1.500 0 1 1 2 1.300l-.5.700M5.500 7.800v1" stroke="#fff" fill="none"/></svg>帮助</button>
  </nav>
  <div class="w-[4px] shrink-0 bg-[#d9dade] pt-[262px]"><button class="flex items-center w-full h-[61px] bg-[#e86c28]" aria-label="展开"><span class="size-[2px] bg-white ml-px rounded-full"></span></button></div>
</main>

<!-- Status bar -->
<div class="relative h-[15px] shrink-0 bg-[#e1e1e3] flex items-center whitespace-nowrap text-[#555]">
  <span class="w-[216px] text-center">幻灯片 9 / 11</span><span class="w-px h-[7px] bg-[#aaa]"></span>
  <span class="w-[134px] pl-[53px]">Office 主题</span><span class="w-px h-[7px] bg-[#aaa]"></span>
  <div class="ml-auto flex items-center h-full">
    <button class="w-[20px] flex items-center justify-center gap-[3px]" aria-label="备注"><svg class="size-[8px]" viewBox="0 0 8 8" stroke="#666"><path d="M0 2h3M4 2h4M0 4h3M2 6h4"/></svg><svg class="w-[3px] h-[2px]"><use href="#caret"/></svg></button>
    <button class="w-[22px] h-full bg-[#f3a587] flex items-center justify-center" aria-label="普通视图"><svg class="w-[10px] h-[8px]" viewBox="0 0 10 8"><path d="M2 0h6v3H2zM0 4h10v4H0z" fill="#7d4a38"/></svg></button>
    <button class="w-[24px] flex justify-center" aria-label="浏览视图"><svg class="w-[10px] h-[8px]" viewBox="0 0 10 8"><path d="M0 0h4v3H0zM5 0h5v3H5zM0 4h4v4H0zM5 4h5v4H5z" fill="#666"/></svg></button>
    <button class="w-[22px] flex justify-center" aria-label="阅读视图"><svg class="w-[10px] h-[8px]" viewBox="0 0 10 8" fill="none" stroke="#777"><path d="M.5.5H5v7H.5zM5 .5h4.500v7H5"/></svg></button>
    <button class="w-[21px] h-full bg-[#a3a0a3] flex items-center justify-center mx-[5px]" aria-label="放映"><svg class="w-[7px] h-[8px]" viewBox="0 0 7 8"><path d="M0 0v8l7-4z" fill="#fff"/></svg></button>
    <span class="w-[30px] text-center text-[9px]">114 %</span>
    <button class="w-[13px] text-[11px]" aria-label="缩小">−</button>
    <input type="range" min="0" max="100" value="52" aria-label="缩放" class="appearance-none w-[84px] h-[10px] bg-transparent [&::-webkit-slider-runnable-track]:h-[2px] [&::-webkit-slider-runnable-track]:bg-linear-to-r [&::-webkit-slider-runnable-track]:from-[#ee8040] [&::-webkit-slider-runnable-track]:from-50% [&::-webkit-slider-runnable-track]:to-[#999] [&::-webkit-slider-runnable-track]:to-50% [&::-webkit-slider-thumb]:appearance-none [&::-webkit-slider-thumb]:size-[8px] [&::-webkit-slider-thumb]:-mt-[3px] [&::-webkit-slider-thumb]:rounded-full [&::-webkit-slider-thumb]:bg-white [&::-webkit-slider-thumb]:border [&::-webkit-slider-thumb]:border-[#999]">
    <button class="w-[10px] text-[11px]" aria-label="放大">+</button>
    <button class="w-[13px] flex justify-center" aria-label="适应窗口"><svg class="size-[8px]" viewBox="0 0 8 8" fill="none" stroke="#666"><path d="M.5 3V.5H3M5 .5h2.500V3M7.500 5v2.500H5M3 7.500H.500V5M3 4h2"/></svg></button>
  </div>
  <div class="absolute right-[24px] bottom-[5px] flex items-end gap-[10px] pointer-events-none text-white/70">
    <span class="text-[24px] leading-[28px] font-medium">西部开源-秦疆</span>
    <svg class="w-[85px] h-[38px]"><use href="#bili"/></svg>
  </div>
</div>

<!-- Taskbar -->
<footer class="relative h-[18px] shrink-0 flex items-center bg-linear-to-r from-[#1d302d] via-[#1c2b35] to-[#231a2e] text-white whitespace-nowrap">
  <button class="w-[22px] flex justify-center" aria-label="开始"><svg class="size-[10px]" viewBox="0 0 10 10" fill="#fff"><path d="M0 1.500 4.500 1v3.800H0zM5 .9 10 0v4.800H5zM0 5.200h4.500V9L0 8.500zM5 5.200h5V10l-5-.9z"/></svg></button>
  <button class="w-[24px] flex justify-center" aria-label="任务视图"><svg class="size-[10px]" viewBox="0 0 10 10" fill="none" stroke="#ccc"><path d="M.5 3h6v4h-6zM.5 0v1.500h6V0M.5 10V8.500h6V10M9 0v10"/></svg></button>
  <button class="w-[99px] h-full bg-[#43524f] border-b border-[#76b9e8] flex items-center gap-[3px] pl-[5px]"><svg class="size-[10px]" viewBox="0 0 10 10"><rect width="10" height="10" rx="1" fill="#ec6c2c"/><path d="M2 3h4.500a1.200 1.200 0 0 1 0 2.500H4M3 3v4.500" stroke="#fff" fill="none"/></svg>Java方法详解.pptx * ...</button>
  <button class="w-[94px] ml-[3px] h-full border-b border-[#76b9e8] flex items-center gap-[3px] pl-[2px]"><svg class="size-[10px]" viewBox="0 0 10 10"><rect width="10" height="10" fill="#2a67d0"/><rect x="1" y="1" width="8" height="8" fill="#111"/><path d="M2.500 2.500v3M5 2.500v3H4M2.500 7.500h3" stroke="#fff" fill="none"/></svg>JavaSE [F:\班级管理\...</button>
  <button class="w-[95px] ml-[5px] h-full border-b border-[#76b9e8] flex items-center gap-[3px] pl-[3px]"><svg class="w-[9px] h-[8px]" viewBox="0 0 9 8"><rect width="9" height="8" fill="#eee"/><rect x="1" y="2" width="4" height="4" fill="#e2622c"/><path d="M6 4l2-2v4z" fill="#e2622c"/></svg>ocam</button>
  <button class="w-[94px] ml-[5px] h-full border-b border-[#76b9e8] flex items-center gap-[3px] pl-[2px]"><svg class="w-[10px] h-[8px]" viewBox="0 0 10 8"><rect x=".5" y=".5" width="9" height="7" fill="#000" stroke="#ccc"/><path d="M2 3h2M5 3l1 2M7 4h1" stroke="#fff" stroke-width=".8"/></svg>选择管理员: C:\Wind...</button>
  <div class="ml-auto flex items-center">
    <button class="w-[15px] flex justify-center" aria-label="显示隐藏的图标"><svg class="w-[7px] h-[4px]" viewBox="0 0 7 4"><path d="M.5 3.500l3-3 3 3" stroke="#ddd" fill="none"/></svg></button>
    <button class="w-[15px] flex justify-center" aria-label="录屏"><svg class="size-[10px]" viewBox="0 0 10 10"><circle cx="5" cy="5" r="5" fill="#fff"/><circle cx="5" cy="5" r="3.500" fill="#fff" stroke="#d33a30" stroke-width="1.200"/><circle cx="5" cy="5" r="1.800" fill="#d33a30"/></svg></button>
    <button class="w-[15px] flex justify-center" aria-label="微信"><svg class="size-[10px]" viewBox="0 0 10 10"><ellipse cx="4" cy="4" rx="4" ry="3.500" fill="#4ec450"/><ellipse cx="7" cy="6.500" rx="3" ry="2.700" fill="#e9f5e9"/></svg></button>
    <button class="w-[14px] flex justify-center" aria-label="QQ"><svg class="size-[10px]" viewBox="0 0 10 10"><ellipse cx="5" cy="4" rx="3" ry="4" fill="#111"/><ellipse cx="5" cy="7" rx="3.500" ry="2.500" fill="#eee"/><path d="M2 5h6v1.500H2z" fill="#e02a20"/><path d="M2 9h6v1H2z" fill="#f0a020"/></svg></button>
    <button class="w-[15px] flex justify-center" aria-label="安全"><svg class="size-[10px]" viewBox="0 0 10 10"><circle cx="5" cy="5" r="5" fill="#f3c21a"/><path d="M0 5a5 5 0 0 0 9 3z" fill="#4cab38"/><path d="M5 2.500v5M2.500 5h5" stroke="#267326" stroke-width="1.800"/></svg></button>
    <button class="w-[15px] flex justify-center" aria-label="网络"><svg class="size-[10px]" viewBox="0 0 10 10" fill="none" stroke="#ddd"><path d="M2.500 1.500h7v5h-7zM6 7v2M4 9.500h4M.5 1v5h2"/></svg></button>
    <button class="w-[15px] flex justify-center" aria-label="音量"><svg class="size-[11px]" viewBox="0 0 11 11" fill="none" stroke="#ddd"><path d="M.5 4h2l2-2v7l-2-2h-2zM6 4q1 1.500 0 3M7.500 3q2 2.500 0 5M9 2q2.500 3.500 0 7"/></svg></button>
    <button class="w-[14px]">中</button>
    <button class="w-[22px] flex justify-center" aria-label="搜狗输入法"><span class="size-[10px] rounded-[2px] bg-[#ea5a28] text-white font-bold text-[9px] leading-[10px] text-center">S</span></button>
    <button class="w-[22px] flex justify-center"><span class="size-[14px] rounded-full bg-[#1fb35b] text-[8px] leading-[14px] text-center">61</span></button>
    <button class="w-[24px] mr-[9px] flex justify-center" aria-label="通知"><svg class="size-[10px]" viewBox="0 0 10 10"><path d="M0 1h9v7H6L5 10 4 8H0z" fill="#e6e6ea"/><path d="M2 3h5M2 5h5" stroke="#777"/></svg></button>
  </div>
  <div class="absolute left-[10px] -top-[8px] flex items-center gap-[4px] text-white/30 pointer-events-none text-[14px] leading-[16px]"><svg class="w-[39px] h-[16px]" viewBox="0 0 85 38" fill="currentColor"><path d="M2 3 8 0 11 20Q22 20 21 30 18 36 5 37zM24 14l4-1 3 22h-5zM32 5l5-1 2 31h-5zM41 14l4-1 1 22h-4zM45 3l6-3 3 20Q65 20 64 30 61 36 48 37zM66 14l4-1 2 22h-4zM73 5l5-1 2 31h-5z"/></svg>BV12J41137hu P50 02:18/13:35</div>
  <span class="absolute right-[6px] top-[2px] text-[10px] leading-[13px] text-white/35 pointer-events-none">@51CTO博客</span>
</footer>
</body>
</html>
